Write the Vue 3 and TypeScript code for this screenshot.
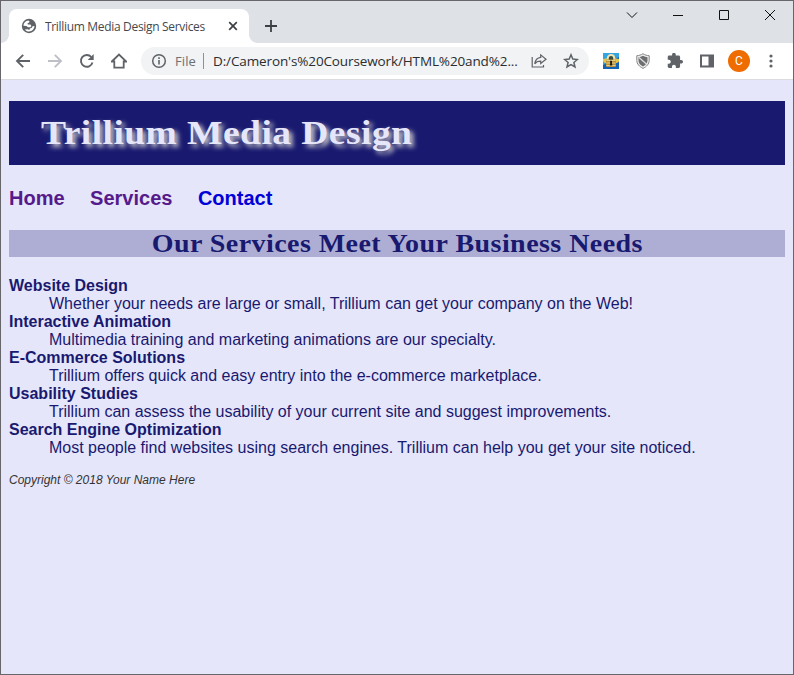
<script setup lang="ts">
interface Service {
  name: string
  description: string
}

interface NavLink {
  label: string
  visited: boolean
}

const links: NavLink[] = [
  { label: 'Home', visited: true },
  { label: 'Services', visited: true },
  { label: 'Contact', visited: false },
]

const services: Service[] = [
  { name: 'Website Design', description: 'Whether your needs are large or small, Trillium can get your company on the Web!' },
  { name: 'Interactive Animation', description: 'Multimedia training and marketing animations are our specialty.' },
  { name: 'E-Commerce Solutions', description: 'Trillium offers quick and easy entry into the e-commerce marketplace.' },
  { name: 'Usability Studies', description: 'Trillium can assess the usability of your current site and suggest improvements.' },
  { name: 'Search Engine Optimization', description: 'Most people find websites using search engines. Trillium can help you get your site noticed.' },
]
</script>

<template>
  <div class="window">
    <div class="tabstrip">
      <div class="tab">
        <svg class="globe" width="16" height="16" viewBox="0 0 16 16">
          <circle cx="8" cy="8" r="7.2" fill="#5f6368" />
          <path d="M2.400 7.800C2.500 5.200 4.500 3 7.400 2.600L8.600 3.400 8.200 4.600 6.600 5.200 6.800 6.400 9.400 6.600 10.400 8 9.400 9.200H7L5.400 8Z" fill="#fff" />
          <path d="M9 10.600 10.800 9.800 11.600 8.200 13.500 8C13.400 11 11.200 13.400 8 13.500 6.200 13.400 4.800 12.600 3.800 11.400L6.800 11.200 8.200 12Z" fill="#fff" />
        </svg>
        <span class="tab-title">Trillium Media Design Services</span>
        <svg class="tab-close" width="10" height="10" viewBox="0 0 10 10"><path d="M1.2 1.2 8.8 8.8M8.8 1.2 1.2 8.8" stroke="#3c4043" stroke-width="1.7" /></svg>
      </div>
      <svg class="new-tab" width="12" height="12" viewBox="0 0 12 12"><path d="M6 0V12M0 6H12" stroke="#3c4043" stroke-width="1.8" /></svg>
      <div class="controls">
        <svg width="12" height="12" viewBox="0 0 12 12"><path d="M1 3.5 6 8.5 11 3.5" /></svg>
        <svg width="12" height="12" viewBox="0 0 12 12"><path d="M1 6.5H11" /></svg>
        <svg width="12" height="12" viewBox="0 0 12 12"><path d="M1.5 1.5H10.5V10.5H1.5Z" /></svg>
        <svg width="12" height="12" viewBox="0 0 12 12"><path d="M1 1 11 11M11 1 1 11" /></svg>
      </div>
    </div>

    <div class="toolbar">
      <div class="nav-buttons">
        <svg width="16" height="16" viewBox="0 0 16 16"><path d="M15 8H2.5M8.2 1.8 2 8l6.2 6.2" stroke="#5f6368" stroke-width="1.9" /></svg>
        <svg width="16" height="16" viewBox="0 0 16 16"><path d="M1 8H13.5M7.8 1.8 14 8l-6.200 6.200" stroke="#bdc1c6" stroke-width="1.9" /></svg>
        <svg width="16" height="16" viewBox="0 0 16 16"><path d="M13.500 9.500A5.900 5.900 0 1 1 12.300 4" stroke="#5f6368" stroke-width="1.900" /><path d="M14.700 1V7H8.700Z" fill="#5f6368" /></svg>
        <svg width="16" height="16" viewBox="0 0 16 16"><path d="M.8 8.500 8 1.500 15.200 8.500H12.700V14.600H3.300V8.500Z" stroke="#5f6368" stroke-width="1.800" /></svg>
      </div>
      <div class="omnibox">
        <svg class="info" width="16" height="16" viewBox="0 0 16 16"><circle cx="8" cy="8" r="6.300" stroke="#5f6368" stroke-width="1.500" /><path d="M8 7V11.500M8 4.300V6" stroke="#5f6368" stroke-width="1.600" /></svg>
        <span class="scheme">File</span>
        <span class="divider"></span>
        <span class="url">D:/Cameron's%20Coursework/HTML%20and%2...</span>
        <svg class="share" width="16" height="16" viewBox="0 0 16 16"><path d="M1.200 4V14H12.500V12" stroke="#5f6368" stroke-width="1.200" /><path d="M9.700 1.900 15 6.200 9.700 10.400V8.200C7 8.200 5 9 3.700 10.800 4.200 7.500 6.300 4.800 9.700 4.400Z" stroke="#5f6368" stroke-width="1.200" /></svg>
        <svg class="star" width="16" height="16" viewBox="0 0 16 16"><path d="M8 1.800 9.800 6.100 14.400 6.500 10.900 9.500 12 14 8 11.600 4 14 5.100 9.500 1.600 6.500 6.200 6.100Z" stroke="#5f6368" stroke-width="1.500" /></svg>
      </div>
      <div class="extensions">
        <svg width="16" height="16" viewBox="0 0 16 16">
          <rect width="16" height="16" fill="#35a5e0" />
          <path d="M0 16V12L16 4V16Z" fill="#1462b4" />
          <path d="M0 6 3 5.500H13L16 6V8.500L14 10H2L0 8.500Z" fill="#e2c54a" />
          <path d="M4.800 7V5A3.200 3 0 0 1 11.200 5V7" fill="#3b4a3c" stroke="#efe3b0" stroke-width="1.900" />
          <rect x="3" y="6.500" width="10" height="7.500" rx="1" fill="#b98f3a" />
          <path d="M3.500 7.500H12.500M3.500 10H12.500M3.500 12.500H12.500" stroke="#ecd893" stroke-width=".9" />
          <path d="M7 7.800H9V10.300L9.400 12.500H6.700L7.200 10.300Z" fill="#20200f" />
        </svg>
        <svg width="16" height="16" viewBox="0 0 16 16">
          <path d="M8 .7C10 2 12 2.600 14.200 2.700V7.500C14.200 11 11.500 13.700 8 15.400 4.500 13.700 1.800 11 1.800 7.500V2.700C4 2.600 6 2 8 .7Z" fill="#eee" stroke="#858585" stroke-width="1" />
          <path d="M8 2.700C9.600 3.600 11 4 12.500 4.200V7.500C12.500 10 10.800 12 8 13.500 5.200 12 3.500 10 3.500 7.500V4.200C5 4 6.400 3.600 8 2.700Z" fill="#6c6e70" />
          <path d="M4 4.500 12 11.500" stroke="#e0e0e0" stroke-width="1.200" />
        </svg>
        <svg width="16" height="16" viewBox="1 1.500 22 22"><path d="M20.500 11H19V7c0-1.100-.9-2-2-2h-4V3.500C13 2.120 11.880 1 10.500 1S8 2.120 8 3.500V5H4c-1.100 0-1.990.9-1.990 2v3.800H3.500c1.490 0 2.700 1.210 2.700 2.700s-1.210 2.700-2.700 2.700H2V20c0 1.100.9 2 2 2h3.800v-1.500c0-1.490 1.210-2.700 2.700-2.700s2.700 1.210 2.700 2.700V22H17c1.100 0 2-.9 2-2v-4h1.500c1.380 0 2.500-1.120 2.500-2.500S21.880 11 20.500 11Z" fill="#5f6368" /></svg>
        <svg width="16" height="16" viewBox="0 0 16 16"><path d="M1 1.500H15V14.500H1ZM3 3.500V12.500H9.500V3.500Z" fill="#5f6368" fill-rule="evenodd" /></svg>
      </div>
      <span class="avatar">C</span>
      <svg class="menu" width="4" height="14" viewBox="0 0 4 14"><g fill="#5f6368"><circle cx="2" cy="2" r="1.600" /><circle cx="2" cy="7" r="1.600" /><circle cx="2" cy="12" r="1.600" /></g></svg>
    </div>

    <main class="page">
      <h1><span>Trillium Media Design</span></h1>
      <nav>
        <a v-for="link in links" :key="link.label" :class="{ visited: link.visited }">{{ link.label }}</a>
      </nav>
      <h2><span>Our Services Meet Your Business Needs</span></h2>
      <dl>
        <template v-for="service in services" :key="service.name">
          <dt>{{ service.name }}</dt>
          <dd>{{ service.description }}</dd>
        </template>
      </dl>
      <footer>Copyright © 2018 Your Name Here</footer>
    </main>
  </div>
</template>

<style>
body {
  margin: 0;
}
</style>

<style scoped>
.window {
  box-sizing: border-box;
  width: 794px;
  height: 675px;
  display: flex;
  flex-direction: column;
  border: 1px solid #67676b;
  background: #e6e6fa;
  overflow: hidden;
  font-family: 'Open Sans', 'Noto Sans', sans-serif;
}
svg {
  display: block;
  flex: none;
  fill: none;
}
.tabstrip {
  flex: none;
  height: 42px;
  display: flex;
  box-sizing: border-box;
  padding: 8px 17px 0 8px;
  background: #dee1e6;
}
.tab {
  position: relative;
  width: 240px;
  height: 34px;
  box-sizing: border-box;
  display: flex;
  align-items: center;
  padding: 0 11px 0 12px;
  border-radius: 8px 8px 0 0;
  background: #fff;
}
.tab::before,
.tab::after {
  content: '';
  position: absolute;
  bottom: 0;
  width: 8px;
  height: 8px;
}
.tab::before {
  left: -8px;
  background: radial-gradient(circle at 0 0, transparent 7.5px, #fff 8px);
}
.tab::after {
  right: -8px;
  background: radial-gradient(circle at 100% 0, transparent 7.5px, #fff 8px);
}
.tab-title {
  margin-left: 8px;
  font-size: 12px;
  letter-spacing: -0.32px;
  white-space: nowrap;
  color: #45484c;
}
.tab-close {
  margin-left: auto;
}
.new-tab {
  margin: 11px 0 0 16px;
}
.controls {
  margin-left: auto;
  display: flex;
  gap: 34px;
}
.controls svg {
  stroke: #111;
  stroke-width: 1;
}
.toolbar {
  flex: none;
  box-sizing: border-box;
  height: 37px;
  display: flex;
  align-items: center;
  padding: 0 20px 0 14px;
  border-bottom: 1px solid #dadce0;
  background: #fff;
}
.nav-buttons {
  display: flex;
  gap: 16px;
}
.omnibox {
  box-sizing: border-box;
  width: 448px;
  height: 28px;
  margin-left: 14px;
  display: flex;
  align-items: center;
  padding: 0 10px;
  border-radius: 14px;
  background: #f1f3f4;
  font-size: 14px;
  white-space: nowrap;
}
.scheme {
  margin-left: 8px;
  width: 20px;
  font-size: 13px;
  letter-spacing: 0.1px;
  color: #6c7075;
}
.divider {
  width: 1px;
  height: 16px;
  margin-left: 8px;
  background: #8d9195;
}
.url {
  width: 310px;
  margin-left: 9px;
  font-size: 13.5px;
  letter-spacing: -0.12px;
  color: #2b2d30;
}
.share {
  margin-left: auto;
}
.star {
  margin-left: 16px;
}
.extensions {
  margin-left: 14px;
  display: flex;
  gap: 16px;
}
.avatar {
  width: 22px;
  height: 22px;
  margin-left: 13px;
  border-radius: 50%;
  background: #ef6c00;
  color: #fff;
  font: 12px/22px Roboto, sans-serif;
  text-align: center;
}
.menu {
  margin-left: auto;
}
.page {
  padding: 21px 8px 0;
  color: #191970;
  font: 16px/18px 'Liberation Sans', Arial, sans-serif;
}
h1,
h2 {
  font-family: Georgia, 'Liberation Serif', serif;
  font-weight: bold;
  white-space: nowrap;
}
/* Widens the serif face to Georgia's proportions. */
h1 span,
h2 span {
  display: inline-block;
}
h1 {
  margin: 0;
  height: 64px;
  padding-left: 32px;
  background: #191970;
  color: #e6e6fa;
  font-size: 33.5px;
  line-height: 64px;
  letter-spacing: 0.4px;
  text-shadow: 3px 3px 5px #ccc;
}
h1 span {
  transform: scaleX(1.12);
  transform-origin: left;
}
nav {
  display: flex;
  gap: 25.5px;
  margin-top: 21px;
  font-size: 20px;
  font-weight: bold;
  line-height: 24px;
}
nav a {
  color: #0000d8;
}
nav a.visited {
  color: #551a8b;
}
h2 {
  height: 27px;
  margin: 20px 0 0;
  background: #aeaed4;
  font-size: 25px;
  line-height: 27px;
  letter-spacing: 0.4px;
  text-align: center;
}
h2 span {
  transform: scaleX(1.12);
}
dl {
  margin: 20px 0 0;
}
dt {
  font-weight: bold;
}
dd {
  margin-left: 40px;
}
footer {
  margin-top: 16px;
  color: #333;
  font-size: 12px;
  font-style: italic;
  line-height: 14px;
}
</style>
